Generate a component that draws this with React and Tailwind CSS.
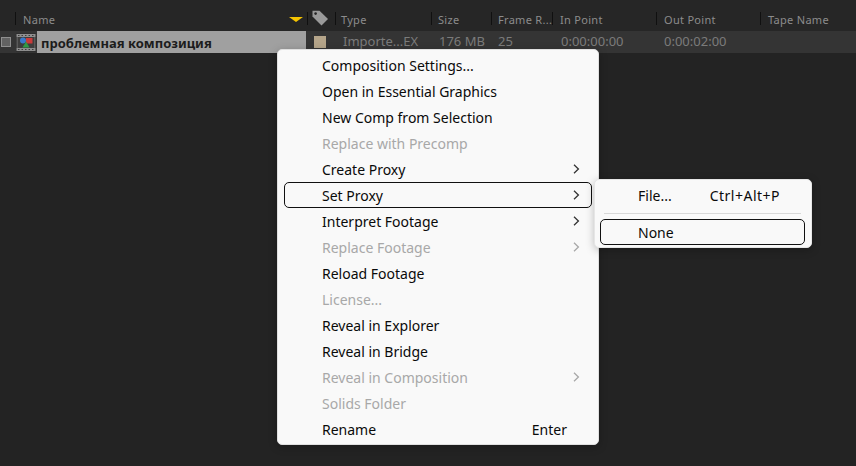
import React from 'react';

const columns = [
  { label: 'Type', width: 'w-[96px]', pad: 'pl-[5px]' },
  { label: 'Size', width: 'w-[60px]', pad: 'pl-[6px]' },
  { label: 'Frame R...', width: 'w-[61px]', pad: 'pl-[6px]' },
  { label: 'In Point', width: 'w-[104px]', pad: 'pl-[7px]' },
  { label: 'Out Point', width: 'w-[104px]', pad: 'pl-[7px]' },
  { label: 'Tape Name', width: 'w-[96px]', pad: 'pl-[7px]' },
];

const cells = [
  { text: 'Importe...EX', width: 'w-[96px]', pad: 'pl-[7px]' },
  { text: '176 MB', width: 'w-[60px]', pad: 'pl-[7px]' },
  { text: '25', width: 'w-[61px]', pad: 'pl-[6px]' },
  { text: '0:00:00:00', width: 'w-[104px]', pad: 'pl-[8px]' },
  { text: '0:00:02:00', width: 'w-[104px]', pad: 'pl-[7px]' },
];

const menuItems = [
  { label: 'Composition Settings...' },
  { label: 'Open in Essential Graphics' },
  { label: 'New Comp from Selection' },
  { label: 'Replace with Precomp', disabled: true },
  { label: 'Create Proxy', arrow: true },
  { label: 'Set Proxy', arrow: true, active: true },
  { label: 'Interpret Footage', arrow: true },
  { label: 'Replace Footage', arrow: true, disabled: true },
  { label: 'Reload Footage' },
  { label: 'License...', disabled: true },
  { label: 'Reveal in Explorer' },
  { label: 'Reveal in Bridge' },
  { label: 'Reveal in Composition', arrow: true, disabled: true },
  { label: 'Solids Folder', disabled: true },
  { label: 'Rename', shortcut: 'Enter' },
];

const Chevron = ({ disabled }) => (
  <svg width="7" height="10" viewBox="0 0 7 10" fill="none" className={disabled ? 'text-[#a8a8a8]' : 'text-[#333333]'}>
    <path d="M1 0.8 L5.4 5 L1 9.2" stroke="currentColor" strokeWidth="1.3" />
  </svg>
);

const CompIcon = () => (
  <svg width="20" height="19" viewBox="0 0 20 19">
    <rect x="0" y="0" width="20" height="19" fill="#2e2e2e" />
    <rect x="0.5" y="1" width="19" height="3" fill="#8e8e8e" />
    <rect x="0.5" y="15" width="19" height="3" fill="#8e8e8e" />
    <path d="M2 2.5h1.5M5.5 2.5h1.5M9 2.5h1.5M12.5 2.5h1.5M16 2.5h1.5M2 16.5h1.5M5.5 16.5h1.5M9 16.5h1.5M12.5 16.5h1.5M16 16.5h1.5" stroke="#3c3c3c" />
    <rect x="0.5" y="4" width="19" height="11" fill="#5a5a5a" />
    <rect x="2" y="4" width="16" height="11" fill="#3d3d3d" />
    <rect x="10" y="5" width="6.5" height="5.5" fill="#c93a3a" />
    <circle cx="7" cy="7.5" r="3" fill="#3a78cc" />
    <path d="M10 8.5 L13.5 14.5 L6.5 14.5 Z" fill="#2f9a45" />
  </svg>
);

const TagIcon = () => (
  <svg width="17" height="16" viewBox="0 0 17 16">
    <path d="M0.5 3 L0.5 0.8 L7.5 0.8 L16 9 L9.5 15.5 L0.5 6.5 Z" fill="#9a9a9a" />
    <circle cx="3.6" cy="3.6" r="1.3" fill="#262626" />
  </svg>
);

const Divider = () => <span className="w-px h-[13px] bg-[#101010] shrink-0" />;

const App = () => {
  return (
    <div className="relative w-[856px] h-[466px] overflow-hidden bg-[#232323] font-['Noto_Sans',sans-serif]">
      {/* column headers */}
      <div className="h-[31px] bg-[#262626] pt-[12px] flex items-start text-[11px] leading-[15px] text-[#8c8c8c]">
        <div className="w-[15px] shrink-0" />
        <div className="w-[292px] shrink-0 flex items-start relative">
          <Divider />
          <span className="pl-[7px] tracking-[0.3px]">Name</span>
          <span className="absolute right-[4px] top-[5px] w-0 h-0 border-l-[7px] border-r-[7px] border-t-[5px] border-l-transparent border-r-transparent border-t-[#f5c400]" />
        </div>
        <div className="w-[28px] shrink-0 flex items-start">
          <Divider />
          <span className="pl-[4px] -mt-[2px]">
            <TagIcon />
          </span>
        </div>
        {columns.map((col) => (
          <div key={col.label} className={`${col.width} shrink-0 flex items-start`}>
            <Divider />
            <span className={`${col.pad} tracking-[0.3px] whitespace-nowrap`}>{col.label}</span>
          </div>
        ))}
      </div>

      {/* composition row */}
      <div className="h-[22px] bg-[#343434] flex items-center text-[13px] text-[#7b7b7b]">
        <div className="w-[16px] shrink-0 pl-[1px]">
          <div className="w-[10px] h-[10px] border border-[#8f8f8f] bg-[#626262]" />
        </div>
        <div className="w-[21px] shrink-0">
          <CompIcon />
        </div>
        <div className="w-[269px] h-[22px] shrink-0 bg-[#a0a0a0] pl-[4px] text-[13px] leading-[24px] font-bold text-[#1c1c1c] whitespace-nowrap">
          проблемная композиция
        </div>
        <div className="w-[30px] shrink-0 pl-[8px]">
          <div className="w-[12px] h-[12px] bg-[#b5a58a]" />
        </div>
        {cells.map((cell) => (
          <div key={cell.text} className={`${cell.width} ${cell.pad} shrink-0 whitespace-nowrap -mt-[1px]`}>
            {cell.text}
          </div>
        ))}
      </div>

      {/* context menu */}
      <div className="absolute left-[277px] top-[49px] w-[322px] h-[396px] pt-[2px] px-[6px] bg-[#f9f9f9] rounded-[5px] border border-[#e0e0e0] text-[14px] text-[#0a0a0a] shadow-[0_2px_8px_rgba(0,0,0,0.25)]">
        {menuItems.map((item) => (
          <div
            key={item.label}
            className={`h-[26px] pl-[37px] pr-[11px] flex items-center justify-between whitespace-nowrap rounded-[5px] border ${
              item.active ? 'border-[#111111]' : 'border-transparent'
            } ${item.disabled ? 'text-[#a8a8a8]' : ''}`}
          >
            <span>{item.label}</span>
            {item.arrow && <Chevron disabled={item.disabled} />}
            {item.shortcut && <span className="pr-[13px]">{item.shortcut}</span>}
          </div>
        ))}
      </div>

      {/* proxy submenu */}
      <div className="absolute left-[594px] top-[179px] w-[218px] h-[69px] pl-[5px] pr-[6px] pt-[2px] bg-[#f9f9f9] rounded-[5px] border border-[#e6e6e6] text-[14px] text-[#0a0a0a] shadow-[0_2px_8px_rgba(0,0,0,0.25)]">
        <div className="h-[26px] pl-[38px] flex items-center gap-[38px] whitespace-nowrap">
          <span>File...</span>
          <span className="tracking-[0.5px]">Ctrl+Alt+P</span>
        </div>
        <div className="h-px bg-[#d8d8d8] mx-[4px] mt-[5px] mb-[5px]" />
        <div className="h-[26px] pl-[37px] flex items-center border border-[#111111] rounded-[5px]">
          None
        </div>
      </div>
    </div>
  );
};

export default App;
